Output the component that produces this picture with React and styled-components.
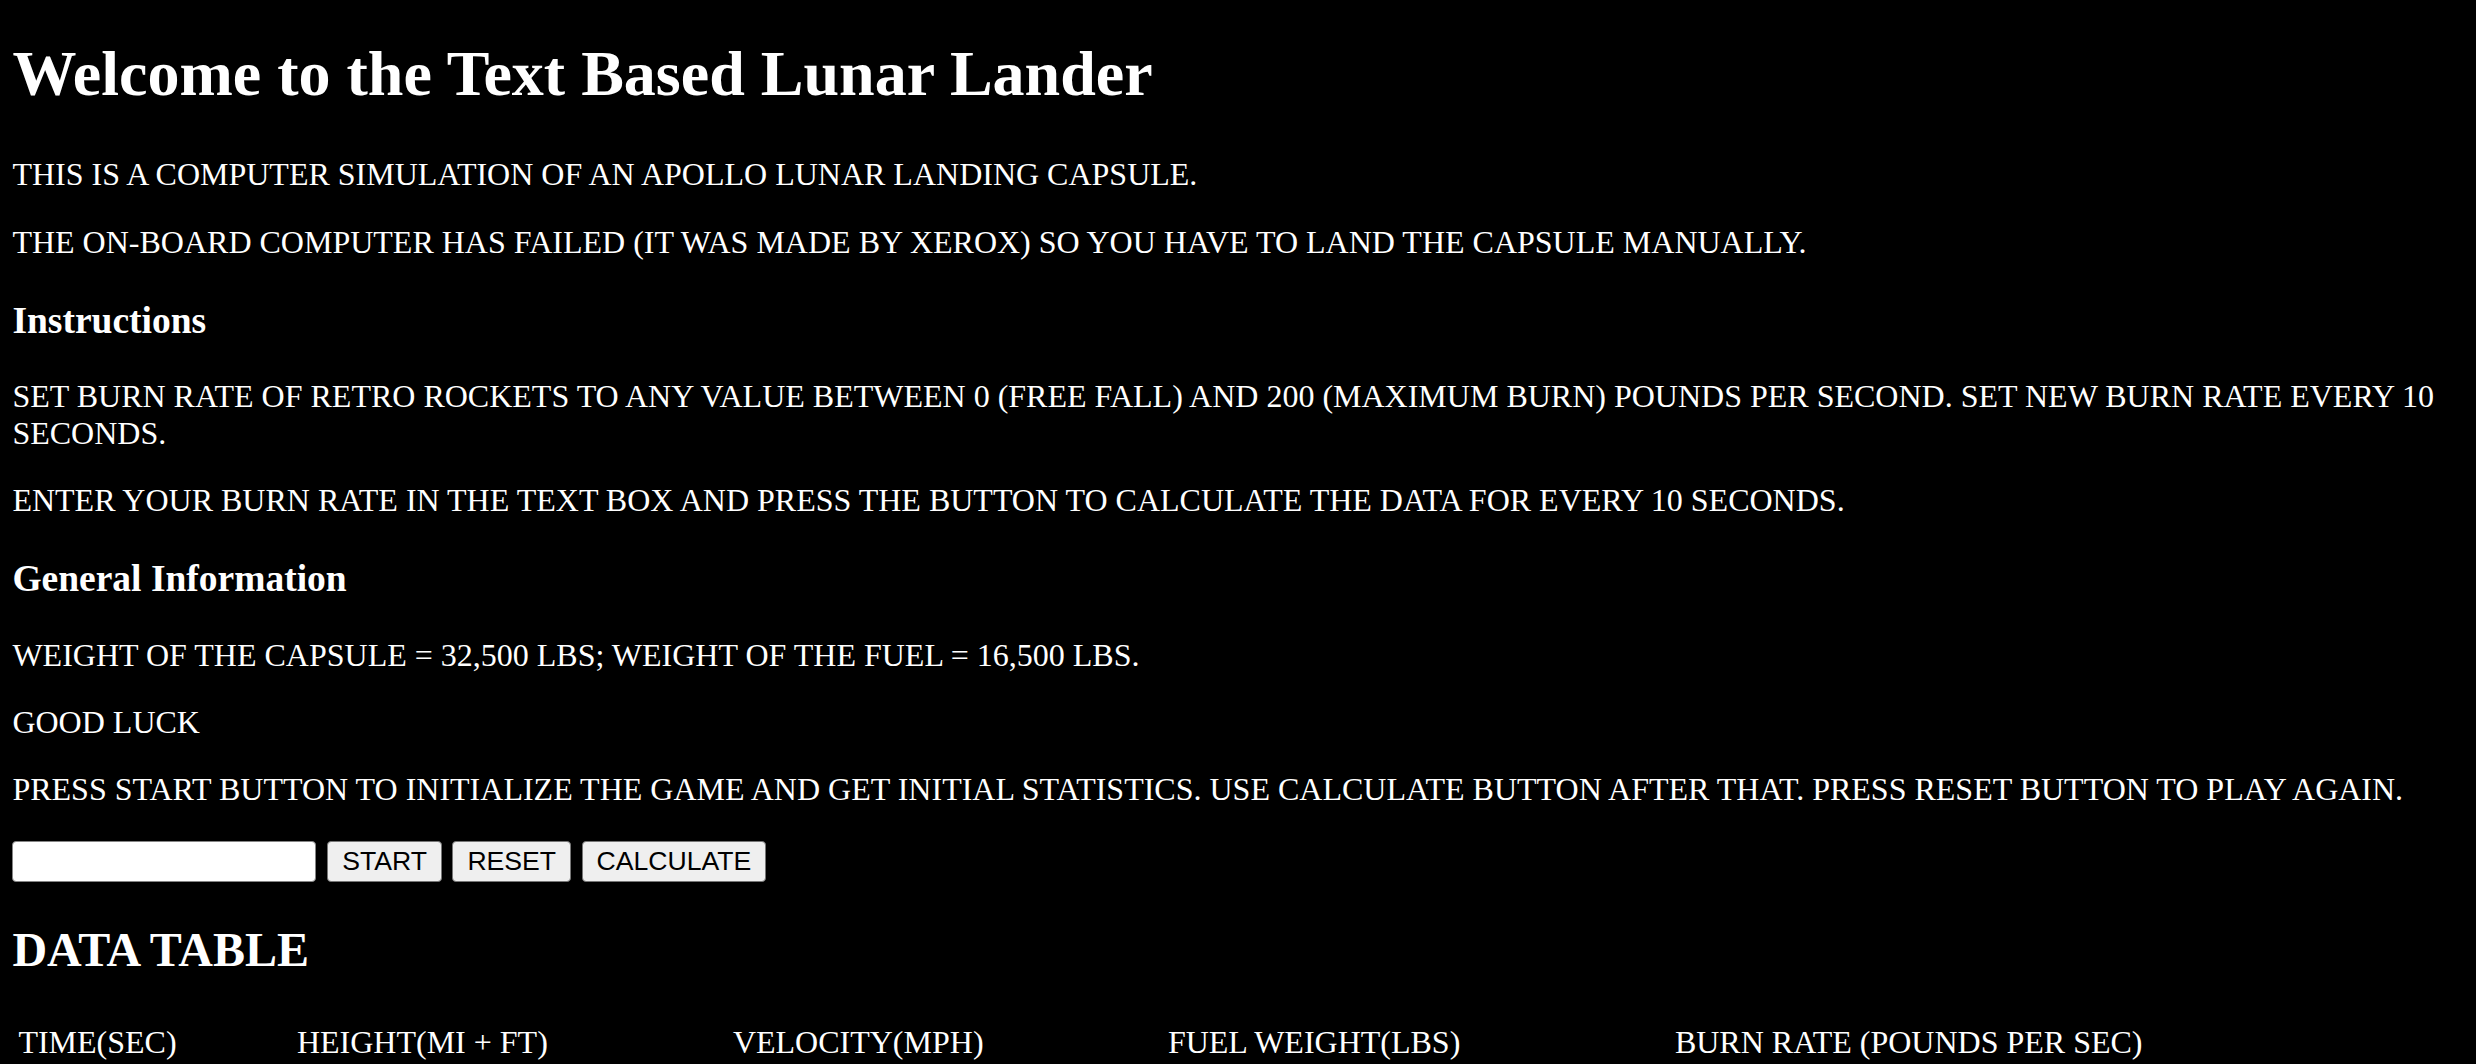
import React from 'react';
import styled, { createGlobalStyle } from 'styled-components';

const GlobalStyle = createGlobalStyle`
  html, body {
    margin: 0;
    padding: 0;
    background: #000;
  }
  body {
    color: #fff;
    font-family: "Liberation Serif", "Times New Roman", Times, serif;
    font-size: 32px;
    line-height: 36.4px;
  }
`;

const Page = styled.main`
  padding: 0 12.4px 12px;
  overflow: hidden;
`;

const Title = styled.h1`
  font-size: 64px;
  line-height: 71.2px;
  font-weight: bold;
  margin: 38px 0 47px;
`;

const Heading = styled.h3`
  font-size: 37.5px;
  line-height: 41.7px;
  font-weight: bold;
  margin: 40px 0 36.5px;
`;

const Text = styled.p`
  margin: 31px 0;
`;

const Controls = styled.div`
  display: flex;
  align-items: center;
  gap: 10.5px;
  margin: 33.5px 0 0;
`;

const BurnInput = styled.input`
  box-sizing: border-box;
  width: 303.5px;
  height: 40.6px;
  background: #fff;
  border: 1.6px solid #858585;
  border-radius: 4px;
  font-family: "Liberation Sans", Arial, sans-serif;
  font-size: 25px;
  padding: 0 4px;
  margin-right: 0.8px;
`;

const Button = styled.button`
  box-sizing: border-box;
  height: 40.6px;
  padding: 0 14px;
  background: #efefef;
  color: #000;
  border: 1.6px solid #767676;
  border-radius: 4px;
  font-family: "Liberation Sans", Arial, sans-serif;
  font-size: 26.6px;
  line-height: 1;
  cursor: pointer;

  &:hover {
    background: #e5e5e5;
  }
`;

const SubTitle = styled.h2`
  font-size: 48px;
  line-height: 53.4px;
  font-weight: bold;
  margin: 41.5px 0 43px;
`;

const Table = styled.table`
  border-spacing: 3px;
  margin-left: 1.5px;
`;

const Cell = styled.td`
  padding: 1.5px;
  width: ${(p) => (p.$w ? `${p.$w}px` : 'auto')};
  white-space: nowrap;
  text-align: left;
  vertical-align: middle;
`;

const columns = [
  { label: 'TIME(SEC)', w: 272.5 },
  { label: 'HEIGHT(MI + FT)', w: 430 },
  { label: 'VELOCITY(MPH)', w: 429 },
  { label: 'FUEL WEIGHT(LBS)', w: 501 },
  { label: 'BURN RATE (POUNDS PER SEC)' },
];

const App = () => {
  return (
    <Page>
      <GlobalStyle />
      <Title>Welcome to the Text Based Lunar Lander</Title>
      <Text>THIS IS A COMPUTER SIMULATION OF AN APOLLO LUNAR LANDING CAPSULE.</Text>
      <Text>
        THE ON-BOARD COMPUTER HAS FAILED (IT WAS MADE BY XEROX) SO YOU HAVE TO LAND THE CAPSULE MANUALLY.
      </Text>

      <Heading>Instructions</Heading>
      <Text>
        SET BURN RATE OF RETRO ROCKETS TO ANY VALUE BETWEEN 0 (FREE FALL) AND 200 (MAXIMUM BURN) POUNDS PER
        SECOND. SET NEW BURN RATE EVERY 10 SECONDS.
      </Text>
      <Text>
        ENTER YOUR BURN RATE IN THE TEXT BOX AND PRESS THE BUTTON TO CALCULATE THE DATA FOR EVERY 10 SECONDS.
      </Text>

      <Heading>General Information</Heading>
      <Text>WEIGHT OF THE CAPSULE = 32,500 LBS; WEIGHT OF THE FUEL = 16,500 LBS.</Text>
      <Text>GOOD LUCK</Text>
      <Text>
        PRESS START BUTTON TO INITIALIZE THE GAME AND GET INITIAL STATISTICS. USE CALCULATE BUTTON AFTER
        THAT. PRESS RESET BUTTON TO PLAY AGAIN.
      </Text>

      <Controls>
        <BurnInput type="text" />
        <Button>START</Button>
        <Button>RESET</Button>
        <Button>CALCULATE</Button>
      </Controls>

      <SubTitle>DATA TABLE</SubTitle>
      <Table>
        <tbody>
          <tr>
            {columns.map((c) => (
              <Cell key={c.label} $w={c.w}>
                {c.label}
              </Cell>
            ))}
          </tr>
        </tbody>
      </Table>
    </Page>
  );
};

export default App;
